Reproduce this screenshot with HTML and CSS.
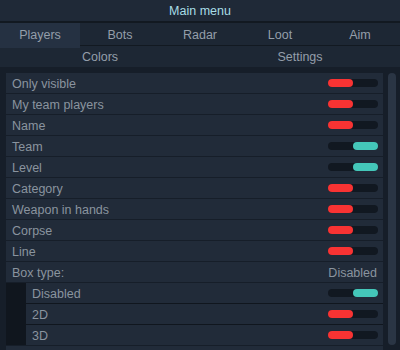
FILE: index.html
```html
<!DOCTYPE html>
<html>
<head>
<meta charset="utf-8">
<link rel="stylesheet" href="styles.css">
</head>
<body>
<div class="frame">
  <div class="title">Main menu</div>
  <div class="tabs five">
    <div class="tab active">Players</div>
    <div class="tab">Bots</div>
    <div class="tab">Radar</div>
    <div class="tab">Loot</div>
    <div class="tab">Aim</div>
  </div>
  <div class="tabs two">
    <div class="tab">Colors</div>
    <div class="tab">Settings</div>
  </div>
  <div class="body">
    <div class="list">
      <div class="row"><span>Only visible</span><span class="toggle off"></span></div>
      <div class="row"><span>My team players</span><span class="toggle off"></span></div>
      <div class="row"><span>Name</span><span class="toggle off"></span></div>
      <div class="row"><span>Team</span><span class="toggle on"></span></div>
      <div class="row"><span>Level</span><span class="toggle on"></span></div>
      <div class="row"><span>Category</span><span class="toggle off"></span></div>
      <div class="row"><span>Weapon in hands</span><span class="toggle off"></span></div>
      <div class="row"><span>Corpse</span><span class="toggle off"></span></div>
      <div class="row"><span>Line</span><span class="toggle off"></span></div>
      <div class="row"><span>Box type:</span><span class="value">Disabled</span></div>
      <div class="sub">
        <div class="row"><span>Disabled</span><span class="toggle on"></span></div>
        <div class="row"><span>2D</span><span class="toggle off"></span></div>
        <div class="row"><span>3D</span><span class="toggle off"></span></div>
      </div>
      <div class="row"></div>
    </div>
    <div class="scroll"><div class="thumb"></div></div>
  </div>
</div>
</body>
</html>
```

FILE: styles.css
```css
html, body {
  margin: 0;
  padding: 0;
  background: #161e29;
}
.frame {
  width: 400px;
  height: 350px;
  overflow: hidden;
  background: #161e29;
  font-family: "Liberation Sans", Arial, sans-serif;
  font-size: 12.5px;
}
.title {
  height: 21px;
  line-height: 23px;
  text-align: center;
  color: #a8dde6;
  background: #1f2937;
  border-bottom: 2px solid #121921;
}
.tabs {
  display: grid;
  background: #1d2734;
  color: #949eaa;
}
.tabs.five {
  grid-template-columns: repeat(5, 1fr);
  height: 22px;
  border-bottom: 1px solid #121921;
}
.tabs.two {
  grid-template-columns: repeat(2, 1fr);
  height: 21px;
}
.tab {
  text-align: center;
  line-height: 25px;
}
.tabs.two .tab {
  line-height: 23px;
}
.tab.active {
  background: #253142;
}
.body {
  display: flex;
  padding: 6px 4px 0 6px;
  gap: 5px;
}
.list {
  width: 377px;
  display: flex;
  flex-direction: column;
  gap: 1px;
}
.row {
  height: 20px;
  flex: none;
  background: #212b39;
  display: flex;
  align-items: center;
  justify-content: space-between;
  padding: 1px 5px 0 6px;
  box-sizing: border-box;
  color: #8a949f;
}
.value {
  color: #8a949f;
  padding-right: 1px;
}
.sub {
  display: flex;
  flex-direction: column;
  gap: 1px;
  padding-left: 20px;
  background: #10161e;
}
.toggle {
  width: 50px;
  height: 8px;
  border-radius: 4px;
  background: #111821;
  position: relative;
  margin-top: -1px;
}
.toggle::after {
  content: "";
  position: absolute;
  top: 0;
  width: 25px;
  height: 8px;
  border-radius: 4px;
}
.toggle.off::after {
  left: 0;
  background: #f83333;
}
.toggle.on::after {
  right: 0;
  background: #44c7b9;
}
.scroll {
  width: 8px;
  height: 272px;
}
.thumb {
  width: 8px;
  height: 272px;
  border-radius: 4px;
  background: #2a3544;
}
```
